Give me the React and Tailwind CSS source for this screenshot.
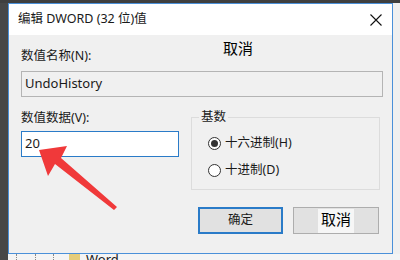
export default function App() {
  const font = "font-['Noto_Sans','Noto_Sans_CJK_SC',sans-serif]";

  return (
    <div className={`w-[400px] h-[260px] relative overflow-hidden bg-[#f4f4f4] text-[#1a1a1a] ${font}`}>
      <div className="h-[3px] bg-[#3f3f3f]" />
      <div className="flex h-[251px]">
        <div className="w-[8px] bg-[#474747]" />
        {/* Dialog */}
        <div className="w-[385px] flex flex-col border border-[#4a90d9] bg-[#f0f0f0]">
          <div className="h-[31px] shrink-0 bg-white flex items-center justify-between pl-[9px] pr-[8px]">
            <span className="text-[12.5px] leading-none">编辑 DWORD (32 位)值</span>
            <svg width="12" height="12" viewBox="0 0 12 12" className="mr-[2px]">
              <path d="M0.5 0.5 L11.5 11.5 M11.5 0.5 L0.5 11.5" stroke="#111" strokeWidth="1.1" />
            </svg>
          </div>
          <div className="flex-1 px-[12px] pt-[13px]">
            <div className="text-[12.5px] leading-[16px]">数值名称(N):</div>
            <div className="mt-[7px] h-[26px] w-[362px] border border-[#b4b4b4] bg-[#f0f0f0] flex items-center px-[3px] text-[13px]">
              UndoHistory
            </div>
            <div className="flex mt-[13px]">
              <div className="w-[161px]">
                <div className="text-[12.5px] leading-[16px]">数值数据(V):</div>
                <div className="mt-[5px] h-[26px] border border-[#2a7bc8] bg-white flex items-center px-[3px] text-[13px]">
                  20
                </div>
              </div>
              <div className="ml-[12px] mt-[-1px] flex flex-col">
                <div className="relative w-[189px] h-[73px] mt-[8px] border border-[#dcdcdc] pt-[17px] pl-[16px]">
                  <span className="absolute -top-[9px] left-[7px] bg-[#f0f0f0] px-[2px] text-[12.5px] leading-[16px]">基数</span>
                  <label className="flex items-center gap-[4px] text-[12.5px] leading-[16px]">
                    <span className="w-[13px] h-[13px] rounded-full border border-[#333] bg-white flex items-center justify-center">
                      <span className="w-[7px] h-[7px] rounded-full bg-[#333]" />
                    </span>
                    十六进制(H)
                  </label>
                  <label className="flex items-center gap-[4px] mt-[11px] text-[12.5px] leading-[16px]">
                    <span className="w-[13px] h-[13px] rounded-full border border-[#333] bg-white" />
                    十进制(D)
                  </label>
                </div>
                <div className="flex gap-[10px] mt-[17px] ml-[7px]">
                  <button className="w-[85px] h-[27px] border-2 border-[#2a7bc8] bg-[#e1e1e1] text-[12.5px]">
                    确定
                  </button>
                  <button className="w-[86px] h-[27px] border border-[#adadad] bg-[#e1e1e1] flex justify-center">
                    <span className="bg-[#f6f6f6] text-black text-[15px] leading-[20px] px-[3px] mt-[1px]">取消</span>
                  </button>
                </div>
              </div>
            </div>
          </div>
        </div>
        <div className="flex-1 bg-[#f0f0f0]" />
      </div>
      {/* Tree strip below dialog */}
      <div className="h-[6px] flex items-start relative">
        <div className="w-[8px] h-full bg-[#474747]" />
        <div className="ml-[8px] w-px h-full border-l border-dotted border-[#888]" />
        <div className="ml-[18px] w-px h-full border-l border-dotted border-[#888]" />
        <div className="ml-[17px] w-px h-full border-l border-dotted border-[#888]" />
        <div className="ml-[15px] w-[11px] h-full bg-[#e6cd7a]" />
        <span className="ml-[6px] text-[13px] leading-[13px] -mt-[1px]">Word</span>
      </div>

      {/* Overlays */}
      <span className="absolute left-[223px] top-[38px] text-[15px] leading-[20px] text-black">取消</span>
      <svg className="absolute left-0 top-0" width="400" height="260" viewBox="0 0 400 260">
        <path d="M39 150 L67 146 L61 158 L117 207 L114 210 L55 164 L48 176 Z" fill="#f0393a" />
      </svg>
    </div>
  );
}
